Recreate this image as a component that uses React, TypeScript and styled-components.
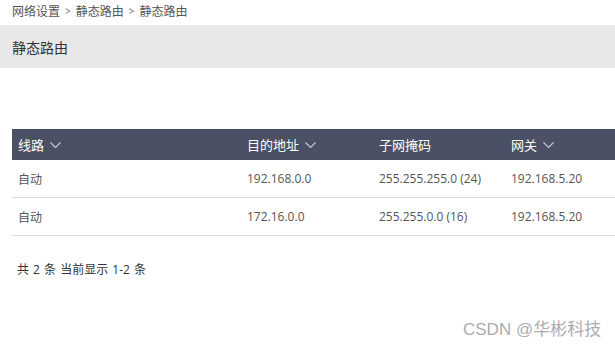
import React from "react";
import styled, { createGlobalStyle } from "styled-components";

const Global = createGlobalStyle`
  html, body { margin: 0; padding: 0; background: #fff; }
  body { font-family: "Open Sans", "Noto Sans CJK SC", sans-serif; }
`;

const Page = styled.div`
  position: relative;
  width: 615px;
  height: 346px;
  overflow: hidden;
  background: #fff;
`;

const Breadcrumb = styled.div`
  height: 25px;
  display: flex;
  align-items: center;
  padding-left: 12px;
  font-size: 12px;
  color: #555;
  gap: 5px;
  margin-top: -2px;
`;

const Sep = styled.span`
  font-size: 10px;
  color: #666;
`;

const TitleBar = styled.div`
  height: 43px;
  margin-top: 2px;
  display: flex;
  align-items: center;
  padding-left: 12px;
  background: #e8e8e8;
  font-size: 14px;
  color: #333;
`;

const Table = styled.div`
  margin: 61px 0 0 12px;
`;

const Row = styled.div<{ $head?: boolean }>`
  display: grid;
  grid-template-columns: 229px 132px 132px 1fr;
  align-items: center;
  height: ${(p) => (p.$head ? "31px" : "37px")};
  background: ${(p) => (p.$head ? "#4b5165" : "#fff")};
  color: ${(p) => (p.$head ? "#fff" : "#555")};
  border-bottom: ${(p) => (p.$head ? "none" : "1px solid #ddd")};
  font-size: ${(p) => (p.$head ? "13px" : "12px")};
`;

const Cell = styled.div`
  padding-left: 6px;
  display: flex;
  align-items: center;
  gap: 6px;
  white-space: nowrap;
`;

const Footer = styled.div`
  margin: 24px 0 0 17px;
  line-height: 20px;
  font-size: 12px;
  word-spacing: 1px;
  color: #333;
`;

const Watermark = styled.div`
  position: absolute;
  left: 463px;
  top: 315px;
  font-family: "Liberation Sans", "Noto Sans CJK SC", sans-serif;
  font-size: 17px;
  color: #adadad;
  white-space: nowrap;
`;

const Chevron = () => (
  <svg width="11" height="6" viewBox="0 0 11 6">
    <polyline points="0.5,0.5 5.5,5.5 10.5,0.5" fill="none" stroke="#c9ccd6" strokeWidth="1.1" />
  </svg>
);

const rows = [
  ["自动", "192.168.0.0", "255.255.255.0 (24)", "192.168.5.20"],
  ["自动", "172.16.0.0", "255.255.0.0 (16)", "192.168.5.20"],
];

export default function App() {
  return (
    <Page>
      <Global />
      <Breadcrumb>
        <span>网络设置</span>
        <Sep>&gt;</Sep>
        <span>静态路由</span>
        <Sep>&gt;</Sep>
        <span>静态路由</span>
      </Breadcrumb>
      <TitleBar>静态路由</TitleBar>
      <Table>
        <Row $head>
          <Cell>线路<Chevron /></Cell>
          <Cell>目的地址<Chevron /></Cell>
          <Cell>子网掩码</Cell>
          <Cell>网关<Chevron /></Cell>
        </Row>
        {rows.map((r, i) => (
          <Row key={i}>
            {r.map((c, j) => (
              <Cell key={j}>{c}</Cell>
            ))}
          </Row>
        ))}
      </Table>
      <Footer>共 2 条 当前显示 1-2 条</Footer>
      <Watermark>CSDN @华彬科技</Watermark>
    </Page>
  );
}
